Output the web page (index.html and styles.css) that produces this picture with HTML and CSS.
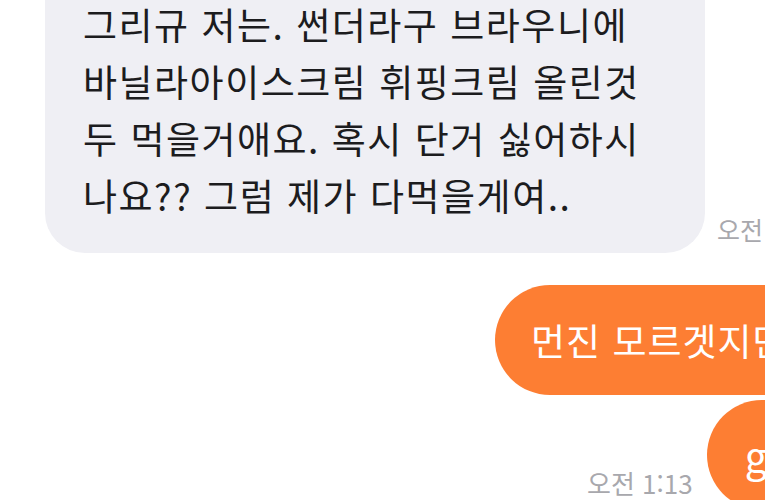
FILE: index.html
```html
<!DOCTYPE html>
<html lang="ko">
<head>
    <meta charset="UTF-8">
    <meta name="viewport" content="width=device-width, initial-scale=1.0">
    <title>Chat</title>
    <link rel="stylesheet" href="styles.css">
</head>
<body>
    <!-- Chat thread -->
    <div class="chat">
        <!-- Received message -->
        <div class="row received">
            <div class="bubble gray">
                그리규 저는. 썬더라구 브라우니에<br>
                바닐라아이스크림 휘핑크림 올린것<br>
                두 먹을거애요. 혹시 단거 싫어하시<br>
                나요?? 그럼 제가 다먹을게여..
            </div>
            <span class="time time-first">오전</span>
        </div>

        <!-- Sent messages -->
        <div class="row sent">
            <div class="bubble orange">먼진 모르겟지만</div>
        </div>
        <div class="row sent-last">
            <span class="time time-last">오전 1:13</span>
            <div class="bubble orange small">g</div>
        </div>
    </div>
</body>
</html>
```

FILE: styles.css
```css
body {
    font-family: "Noto Sans CJK KR", "Noto Sans", sans-serif;
    background-color: #ffffff;
    margin: 0;
    width: 765px;
    height: 500px;
    overflow: hidden;
}

.chat {
    display: flex;
    flex-direction: column;
    margin-top: -40px;
}

.row {
    display: flex;
    align-items: flex-end;
    white-space: nowrap;
}

.received {
    padding-left: 45px;
    gap: 12px;
}

.sent {
    padding-left: 495px;
    margin-top: 32px;
}

.sent-last {
    padding-left: 587px;
    margin-top: 5px;
    gap: 14px;
}

.bubble {
    font-size: 37px;
    line-height: 57px;
    letter-spacing: 1.5px;
    color: #1c1c1e;
}

.bubble.gray {
    background-color: #efeff4;
    width: 660px;
    box-sizing: border-box;
    padding: 36px 20px 29px 38px;
    border-radius: 40px;
}

.bubble.orange {
    background-color: #fd7e33;
    color: #ffffff;
    line-height: 50px;
    letter-spacing: 1px;
    padding: 30px 60px 30px 36px;
    border-radius: 55px;
}

.bubble.small {
    font-size: 40px;
    padding-left: 38px;
}

.time {
    font-size: 25px;
    line-height: 30px;
    color: #a8a8ad;
}

.time-first {
    margin-bottom: 9px;
}

.time-last {
    font-size: 26px;
    margin-bottom: 12px;
}
```
